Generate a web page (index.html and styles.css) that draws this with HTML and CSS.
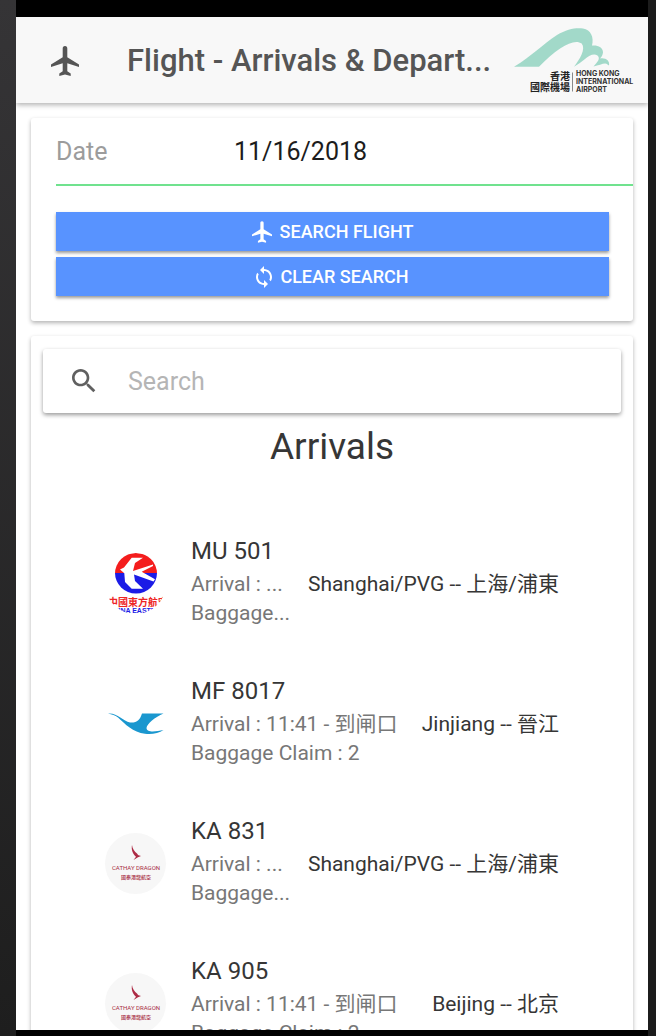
FILE: index.html
```html
<!DOCTYPE html>
<html lang="en">
<head>
<meta charset="utf-8">
<meta name="viewport" content="width=device-width, initial-scale=1">
<title>Flight - Arrivals &amp; Departures</title>
<link rel="stylesheet" href="styles.css">
</head>
<body>
<svg class="defs" aria-hidden="true">
  <symbol id="plane" viewBox="0 0 28 30">
    <path d="M14 0C12.4 0 11.700 1.200 11.700 2.500V11.200L0 18.400V21L11.700 17.300V25.200L8.300 27.600V30L14 28.500L19.700 30V27.600L16.300 25.200V17.300L28 21V18.400L16.300 11.200V2.500C16.300 1.200 15.600 0 14 0Z"/>
  </symbol>
  <symbol id="sync" viewBox="4 1 16 22">
    <path d="M12 4V1L8 5l4 4V6c3.310 0 6 2.690 6 6 0 1.010-.25 1.970-.7 2.800l1.460 1.460C19.540 15.030 20 13.570 20 12c0-4.420-3.580-8-8-8zm0 14c-3.310 0-6-2.690-6-6 0-1.010.25-1.970.7-2.800L5.240 7.740C4.460 8.970 4 10.430 4 12c0 4.420 3.580 8 8 8v3l4-4-4-4v3z"/>
  </symbol>
  <symbol id="magnifier" viewBox="3 3 18 18">
    <path d="M15.500 14h-.79l-.28-.27C15.410 12.590 16 11.110 16 9.500 16 5.910 13.090 3 9.500 3S3 5.910 3 9.500 5.910 16 9.500 16c1.610 0 3.090-.59 4.230-1.570l.27.28v.79l5 4.990L20.490 19l-4.990-5zm-6 0C7.010 14 5 11.990 5 9.500S7.010 5 9.500 5 14 7.010 14 9.500 11.990 14 9.500 14z"/>
  </symbol>
  <symbol id="dragon" viewBox="0 0 61 61">
    <path fill="#ad2b45" d="M27 12C27.500 16 29.500 18.500 32 20.500C33 22 33.500 22.500 36 23L33 24.300L28.500 27L31 23.800C28 21 26 17 27 12Z"/>
    <text x="31" y="36.500" text-anchor="middle" class="dragon-en">CATHAY DRAGON</text>
    <text x="31" y="45.500" text-anchor="middle" class="dragon-zh">國泰港龍航空</text>
  </symbol>
</svg>
<div class="screen">
  <header class="toolbar">
    <svg class="toolbar-plane" aria-hidden="true"><use href="#plane"/></svg>
    <h1 class="toolbar-title">Flight - Arrivals &amp; Depart...</h1>
    <svg class="airport-logo" viewBox="0 0 124 68" role="img" aria-label="Hong Kong International Airport">
      <path fill="#a2d9c9" d="M0 39.700C18 29 29 17 43 8C53 2 62 0.500 69 1.500C77 3 80 10 78 18.500C84 18 89 20 89 25.500C88.700 28 87.500 30 86 31.500C92 30.500 96 34 95 38.500L93.500 37.500C91 35 86 38.500 79.500 39.500C83 35 87 32 83.500 28.500C77 24 69 35 60 39.700C66 32 72 22 67.700 16.500C60 11 44 20 25 39.700Z"/>
      <path stroke="#8a8a8a" d="M58.500 45.500V64.500"/>
      <text x="56" y="53" text-anchor="end" class="logo-zh">香港</text>
      <text x="56" y="64" text-anchor="end" class="logo-zh">國際機場</text>
      <text x="62" y="49" class="logo-en">HONG KONG</text>
      <text x="62" y="57" class="logo-en">INTERNATIONAL</text>
      <text x="62" y="65" class="logo-en">AIRPORT</text>
    </svg>
  </header>
  <main class="content">
    <form class="card search-card">
      <div class="date-row">
        <label for="date">Date</label>
        <input id="date" type="text" value="11/16/2018">
      </div>
      <div class="actions">
        <button type="button"><svg class="button-plane" aria-hidden="true"><use href="#plane"/></svg>SEARCH FLIGHT</button>
        <button type="button"><svg class="button-sync" aria-hidden="true"><use href="#sync"/></svg>CLEAR SEARCH</button>
      </div>
    </form>
    <section class="card results-card">
      <label class="search-bar">
        <svg class="search-icon" aria-hidden="true"><use href="#magnifier"/></svg>
        <input type="search" placeholder="Search" aria-label="Search">
      </label>
      <h2>Arrivals</h2>
      <ul class="flights">
        <li class="flight">
          <svg class="avatar" viewBox="0 0 61 61" role="img" aria-label="China Eastern">
            <path fill="#f41d1d" d="M10 20.500a21 20.500 0 0 1 42 0z"/>
            <path fill="#1b1be6" d="M10 20a21 20.500 0 0 0 42 0z"/>
            <path fill="#fff" d="M15 16.500L19 14.500L26.700 4.700L38 4.700L30 10L28 18L48 11.500V13L36.700 18.700L50 26.300L48.500 28.500L29 21.500L30 28L38 35.800L26.700 35.800L20 29L19.300 20.300Z"/>
            <text x="33" y="52.500" text-anchor="middle" class="eastern-zh">中國東方航空</text>
            <text x="32" y="60" text-anchor="middle" class="eastern-en">CHINA EASTERN</text>
          </svg>
          <div class="details">
            <h3>MU 501</h3>
            <div class="route">
              <p class="status">Arrival : ...<br>Baggage...</p>
              <p class="city">Shanghai/PVG -- 上海/浦東</p>
            </div>
          </div>
        </li>
        <li class="flight">
          <svg class="avatar" viewBox="0 0 61 61" role="img" aria-label="Xiamen Air">
            <path fill="#1a97cf" d="M3 20.500C12 19.500 18 28 25 29.500C32 30 35 27 37 20.500H58.500C50 24 42 31 41.500 35C42 40 51 38.500 58.500 37C54 40.500 46 41.500 40 40.700C28 39.500 20 31 13 24.500C10 22 7 21.500 3 20.500Z"/>
          </svg>
          <div class="details">
            <h3>MF 8017</h3>
            <div class="route">
              <p class="status">Arrival : 11:41 - 到闸口<br>Baggage Claim : 2</p>
              <p class="city">Jinjiang -- 晉江</p>
            </div>
          </div>
        </li>
        <li class="flight">
          <svg class="avatar avatar-gray" role="img" aria-label="Cathay Dragon"><use href="#dragon"/></svg>
          <div class="details">
            <h3>KA 831</h3>
            <div class="route">
              <p class="status">Arrival : ...<br>Baggage...</p>
              <p class="city">Shanghai/PVG -- 上海/浦東</p>
            </div>
          </div>
        </li>
        <li class="flight">
          <svg class="avatar avatar-gray" role="img" aria-label="Cathay Dragon"><use href="#dragon"/></svg>
          <div class="details">
            <h3>KA 905</h3>
            <div class="route">
              <p class="status">Arrival : 11:41 - 到闸口<br>Baggage Claim : 2</p>
              <p class="city">Beijing -- 北京</p>
            </div>
          </div>
        </li>
      </ul>
    </section>
  </main>
</div>
</body>
</html>
```

FILE: styles.css
```css
* {
  box-sizing: border-box;
}

body {
  margin: 0;
  height: 100vh;
  padding: 0 8px 0 16px;
  overflow: hidden;
  background: linear-gradient(#353436, #1e1e1e) left / 16px 100% no-repeat #1c1c1c;
  font-family: Roboto, "Noto Sans CJK SC", sans-serif;
  color: #363636;
}

h1,
h2,
h3,
p,
ul {
  margin: 0;
  padding: 0;
  font-weight: 400;
}

input,
button {
  border: 0;
  padding: 0;
  background: none;
  font: inherit;
  color: inherit;
}

.defs {
  display: none;
}

.screen {
  display: flex;
  flex-direction: column;
  height: 100%;
  border: solid #000;
  border-width: 17px 0 6px;
  background: #fff;
  overflow: hidden;
}

.toolbar {
  display: flex;
  flex: none;
  align-items: center;
  height: 86px;
  padding: 1px 10px 0 35px;
  background: #f8f8f8;
  box-shadow: 0 2px 5px rgba(0, 0, 0, 0.3);
  z-index: 1;
}

.toolbar-plane {
  flex: none;
  width: 28px;
  height: 30px;
  fill: #555;
}

.toolbar-title {
  flex: 1;
  margin-left: 48px;
  overflow: hidden;
  white-space: nowrap;
  font-size: 31px;
  font-weight: 500;
  line-height: 40px;
  color: #555;
}

.airport-logo {
  flex: none;
  width: 124px;
  height: 68px;
}

.logo-zh {
  font: 700 10px "Noto Sans CJK TC", sans-serif;
  fill: #222;
}

.logo-en {
  font: 700 7px Inter, sans-serif;
  fill: #333;
}

.content {
  flex: 1;
  min-height: 0;
  overflow: hidden;
  padding: 15px;
}

.card {
  border-radius: 3px;
  background: #fff;
  box-shadow: 0 2px 4px rgba(0, 0, 0, 0.3);
}

.search-card {
  margin-bottom: 15px;
  padding: 0 0 25px 25px;
}

.date-row {
  display: flex;
  align-items: center;
  height: 68px;
  border-bottom: 2px solid #70e28e;
  font-size: 25px;
}

.date-row label {
  width: 178px;
  color: #9c9c9c;
}

.date-row input {
  flex: 1;
  min-width: 0;
  color: #1c1c1c;
}

.actions {
  display: grid;
  gap: 6px;
  padding: 26px 24px 0 0;
}

.actions button {
  display: flex;
  align-items: center;
  justify-content: center;
  height: 39px;
  background: #5893ff;
  box-shadow: 0 2px 3px rgba(0, 0, 0, 0.4);
  font-size: 18px;
  font-weight: 500;
  color: #fff;
}

.button-plane,
.button-sync {
  width: 20px;
  height: 22px;
  margin-right: 8px;
  fill: #fff;
}

.button-sync {
  width: 16px;
}

.results-card {
  min-height: 760px;
  padding: 13px 12px;
}

.search-bar {
  display: flex;
  align-items: center;
  height: 64px;
  padding: 0 29px;
  border-radius: 3px;
  box-shadow: 0 2px 4px rgba(0, 0, 0, 0.4);
}

.search-icon {
  flex: none;
  width: 24px;
  height: 24px;
  margin-right: 32px;
  fill: #606060;
}

.search-bar input {
  flex: 1;
  min-width: 0;
  font-size: 25px;
}

.search-bar input::placeholder {
  color: #b5b5b5;
}

h2 {
  margin-top: 12px;
  text-align: center;
  font-size: 37px;
  line-height: 44px;
}

.flights {
  padding: 66px 62px 0;
  list-style: none;
}

.flight {
  display: flex;
  height: 140px;
}

.avatar {
  flex: none;
  width: 61px;
  height: 61px;
  margin: 18px 25px 0 0;
  border-radius: 50%;
  overflow: hidden;
}

.avatar-gray {
  background: #f7f7f7;
}

.eastern-zh {
  font: 700 10px "Noto Sans CJK TC", sans-serif;
  fill: #ee2525;
}

.eastern-en {
  font: 700 7px "Liberation Sans", sans-serif;
  fill: #1b1be6;
}

.dragon-en {
  font: 6px Roboto, sans-serif;
  fill: #a72c43;
}

.dragon-zh {
  font: 500 5px "Noto Sans CJK TC", sans-serif;
  fill: #a72c43;
}

.details {
  flex: 1;
  min-width: 0;
}

h3 {
  font-size: 24px;
  line-height: 32px;
}

.route {
  display: flex;
  justify-content: space-between;
  white-space: nowrap;
  font-size: 21px;
  line-height: 29px;
  padding-top: 3px;
}

.status {
  color: #777;
}
```
